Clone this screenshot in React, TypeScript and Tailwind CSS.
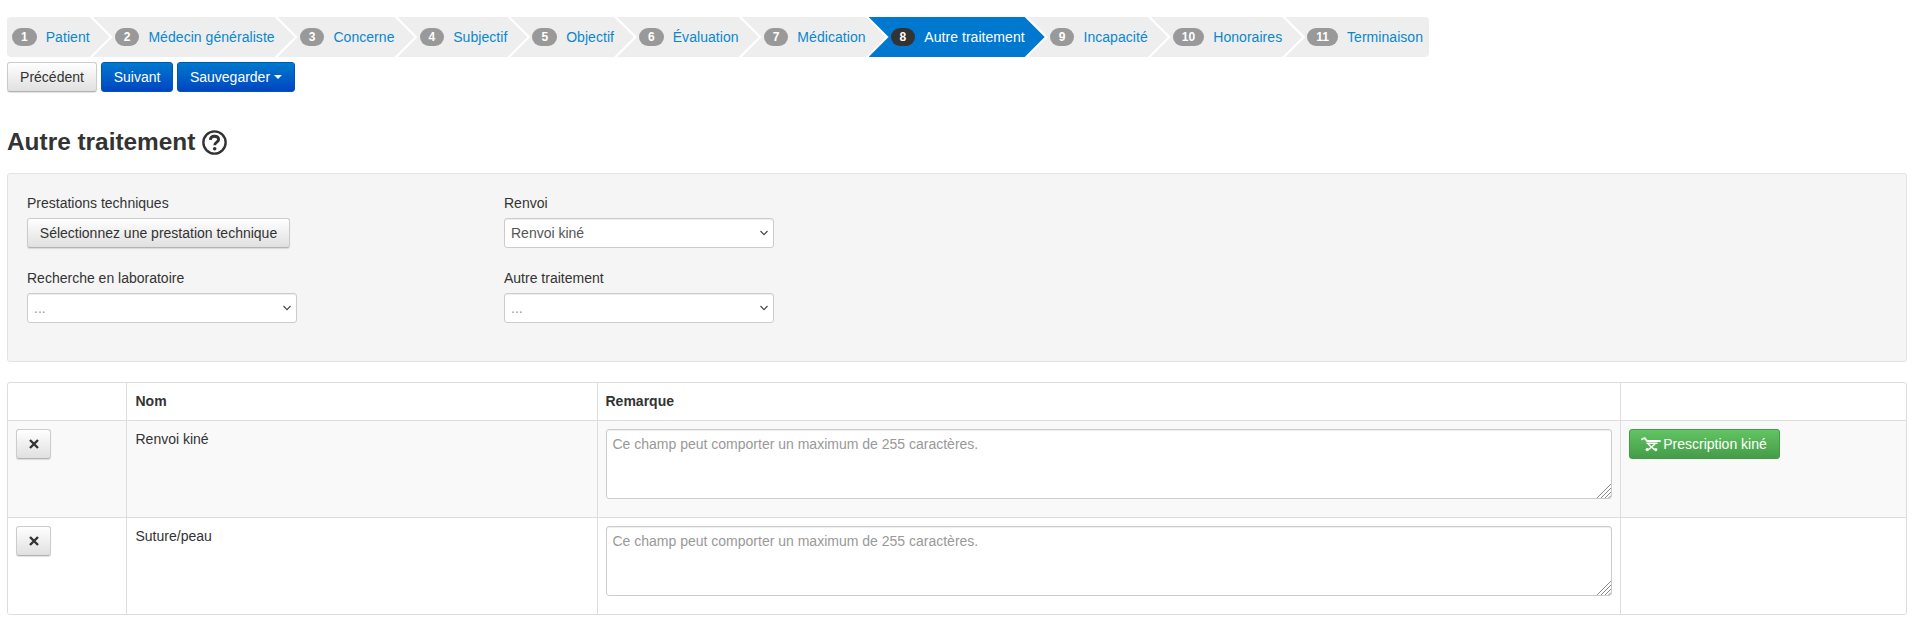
const steps = ["Patient", "Médecin généraliste", "Concerne", "Subjectif", "Objectif", "Évaluation", "Médication", "Autre traitement", "Incapacité", "Honoraires", "Terminaison"];

const shapeFirst = "[clip-path:polygon(0_0,calc(100%-20px)_0,100%_50%,calc(100%-20px)_100%,0_100%)]";
const shapeMiddle = "[clip-path:polygon(0_0,calc(100%-20px)_0,100%_50%,calc(100%-20px)_100%,0_100%,20px_50%)]";
const shapeLast = "[clip-path:polygon(0_0,100%_0,100%_100%,0_100%,20px_50%)]";

function Stepper() {
  return (
    <div className="flex h-10 w-fit overflow-hidden rounded">
      {steps.map((s, i) => {
        const first = i === 0;
        const last = i === steps.length - 1;
        const active = i === 7;
        return (
          <a
            key={s}
            className={`flex items-center whitespace-nowrap tracking-[0.05px] ${first ? "pl-[5px]" : "pl-[22px]"} ${last ? "pr-[6px]" : "pr-[20px] mr-[-17px]"} ${first ? shapeFirst : last ? shapeLast : shapeMiddle} ${active ? "bg-[#0078d0] text-white relative z-10" : "bg-[#eeeeee] text-[#0a87cf]"}`}
          >
            <span className={`mr-[9px] inline-flex h-[18px] items-center justify-center rounded-[9px] px-[9px] text-xs font-bold text-white ${active ? "bg-[#333333]" : "bg-[#999999]"}`}>
              {i + 1}
            </span>
            {s}
          </a>
        );
      })}
    </div>
  );
}

function Btn({ children, className = "" }: { children: React.ReactNode; className?: string }) {
  return (
    <button className={`inline-flex h-[30px] items-center justify-center rounded-[3px] border border-[#cccccc] border-b-[#b3b3b3] bg-gradient-to-b from-white to-[#e0e0e0] text-[#333333] shadow-[0_1px_1px_rgba(0,0,0,0.12)] ${className}`}>
      {children}
    </button>
  );
}

function BtnPrimary({ children, className = "" }: { children: React.ReactNode; className?: string }) {
  return (
    <button className={`inline-flex h-[30px] items-center justify-center rounded-[3px] border border-[#0055bb] bg-gradient-to-b from-[#0079cc] to-[#0044c2] text-white ${className}`}>
      {children}
    </button>
  );
}

function Stretcher() {
  return (
    <svg width="20" height="16" viewBox="0 0 20 16" fill="none" stroke="white" className="mr-[2px]">
      <path d="M1 3.2 L3.6 2 L6 5 H19" strokeWidth="1.8" strokeLinecap="round" strokeLinejoin="round" />
      <path d="M5.5 7.3 H16.5" strokeWidth="1.6" />
      <path d="M7 8 L14 14 M14 8 L7 14" strokeWidth="1.6" />
      <circle cx="6.2" cy="13.6" r="1.6" fill="white" stroke="none" />
      <circle cx="14.8" cy="13.6" r="1.6" fill="white" stroke="none" />
    </svg>
  );
}

function Select({ value, muted }: { value: string; muted?: boolean }) {
  return (
    <div className="relative h-[30px] w-[270px]">
      <select className={`block h-full w-full appearance-none rounded-[3px] border border-[#cccccc] bg-white pl-[6px] pr-5 text-sm shadow-[inset_0_1px_1px_rgba(0,0,0,0.075)] ${muted ? "text-[#999999]" : "text-[#555555]"}`}>
        <option>{value}</option>
      </select>
      <svg width="8" height="6" viewBox="0 0 8 6" fill="none" stroke="#444444" strokeWidth="1.1" className="pointer-events-none absolute right-[6px] top-[12px]">
        <path d="M0.5 1 L4 4.6 L7.5 1" />
      </svg>
    </div>
  );
}

const placeholder = "Ce champ peut comporter un maximum de 255 caractères.";

function Row({ name, shaded, action }: { name: string; shaded?: boolean; action?: boolean }) {
  const cell = "border-l border-[#dddddd] p-2 align-top";
  return (
    <tr className={`border-t border-[#dddddd] ${shaded ? "bg-[#f9f9f9]" : "bg-white"}`}>
      <td className="p-2 align-top">
        <Btn className="w-[35px]">
          <svg width="10" height="10" viewBox="0 0 10 10" stroke="#333333" strokeWidth="2.4"><path d="M1 1 L9 9 M9 1 L1 9" /></svg>
        </Btn>
      </td>
      <td className={`${cell} pl-[9px]`}>{name}</td>
      <td className={cell}>
        <div className="relative mb-[10px] h-[70px]">
          <textarea
            placeholder={placeholder}
            className="block h-full w-full resize-none rounded-[3px] border border-[#cccccc] bg-white px-[6px] pb-[6px] pt-[4px] text-sm shadow-[inset_0_1px_1px_rgba(0,0,0,0.075)] placeholder:text-[#999999]"
          />
          <svg width="15" height="15" viewBox="0 0 15 15" stroke="#8a8a8a" strokeWidth="1" className="pointer-events-none absolute bottom-[1px] right-[1px]">
            <path d="M1 15 L15 1 M5 15 L15 5 M9 15 L15 9 M12.5 15 L15 12.5" />
          </svg>
        </div>
      </td>
      <td className={cell}>
        {action && (
          <button className="inline-flex h-[30px] w-[151px] items-center justify-center rounded-[3px] border border-[#449d44] bg-gradient-to-b from-[#62c462] to-[#459c49] text-white">
            <Stretcher />
            Prescription kiné
          </button>
        )}
      </td>
    </tr>
  );
}

export default function App() {
  return (
    <div className="min-h-[630px] bg-white pl-[7px] pr-[8px] pt-[17px] font-['Liberation_Sans',Arial,sans-serif] text-sm text-[#333333]">
      <Stepper />
      <div className="mt-[5px] flex gap-1">
        <Btn className="w-[90px]">Précédent</Btn>
        <BtnPrimary className="w-[72px]">Suivant</BtnPrimary>
        <BtnPrimary className="w-[118px]">
          Sauvegarder
          <span className="ml-1 h-0 w-0 border-x-4 border-t-4 border-x-transparent border-t-white" />
        </BtnPrimary>
      </div>

      <h3 className="mt-[37px] flex h-[26px] items-center gap-[7px] text-[24.4px] font-bold text-[#333333]">
        Autre traitement
        <svg width="25" height="25" viewBox="0 0 24 24" fill="none" stroke="#333333">
          <circle cx="12" cy="12" r="10.7" strokeWidth="2.3" />
          <path d="M8 9.4 C8.2 7 10 6 12 6 C14.4 6 16 7.3 16 9.2 C16 11.6 12.2 11.8 12.2 14.6" strokeWidth="2.7" />
          <circle cx="12.2" cy="18" r="1.7" fill="#333333" stroke="none" />
        </svg>
      </h3>

      <div className="mt-[18px] h-[189px] rounded-[3px] border border-[#e3e3e3] bg-[#f5f5f5] px-[19px] pt-[19px]">
        <div className="grid grid-cols-[477px_270px] gap-y-[20px]">
          <div>
            <div className="mb-[5px] leading-5">Prestations techniques</div>
            <Btn className="w-[263px]">Sélectionnez une prestation technique</Btn>
          </div>
          <div>
            <div className="mb-[5px] leading-5">Renvoi</div>
            <Select value="Renvoi kiné" />
          </div>
          <div>
            <div className="mb-[5px] leading-5">Recherche en laboratoire</div>
            <Select value="..." muted />
          </div>
          <div>
            <div className="mb-[5px] leading-5">Autre traitement</div>
            <Select value="..." muted />
          </div>
        </div>
      </div>

      <div className="mt-[20px] overflow-hidden rounded-[3px] border border-[#dddddd]">
        <table className="w-full table-fixed border-collapse">
          <colgroup>
            <col className="w-[118px]" />
            <col className="w-[471px]" />
            <col />
            <col className="w-[286px]" />
          </colgroup>
          <thead>
            <tr className="h-[37px] font-bold">
              <th className="p-2" />
              <th className="border-l border-[#dddddd] p-2 pl-[9px] text-left">Nom</th>
              <th className="border-l border-[#dddddd] p-2 text-left">Remarque</th>
              <th className="border-l border-[#dddddd] p-2" />
            </tr>
          </thead>
          <tbody>
            <Row name="Renvoi kiné" shaded action />
            <Row name="Suture/peau" />
          </tbody>
        </table>
      </div>
    </div>
  );
}
